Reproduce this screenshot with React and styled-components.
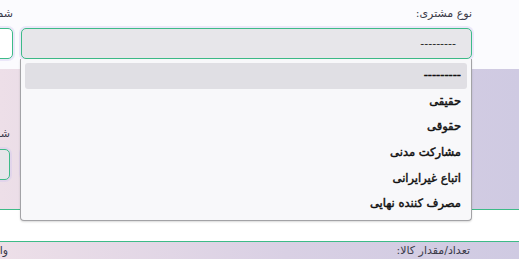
import React from "react";
import styled, { createGlobalStyle } from "styled-components";

const Global = createGlobalStyle`
  html, body { margin: 0; padding: 0; background: #ffffff; }
  body { font-family: "DejaVu Sans", "Noto Sans", sans-serif; }
`;

const Page = styled.div`
  position: relative;
  width: 519px;
  height: 259px;
  overflow: hidden;
  direction: rtl;
`;

const Section = styled.div`
  height: ${(p) => p.$h}px;
  box-sizing: border-box;
  padding: ${(p) => p.$pad || "0"};
  background: ${(p) =>
    p.$tone === "grad"
      ? "linear-gradient(to left, #cfcae2 0%, #d9d0e4 45%, #eddfe8 100%)"
      : p.$tone === "white"
      ? "#ffffff"
      : "#fbfbfe"};
  border-bottom: ${(p) => (p.$line ? "1.5px solid #3dbb88" : "none")};
`;

const Row = styled.div`
  display: grid;
  grid-template-columns: ${(p) => p.$cols};
  column-gap: ${(p) => p.$gap}px;
  justify-content: start;
`;

const Field = styled.div`
  display: flex;
  flex-direction: column;
`;

const Label = styled.label`
  font-size: 11px;
  line-height: 16px;
  height: 16px;
  color: #3a3a48;
  white-space: nowrap;
  margin-bottom: ${(p) => p.$mb ?? 6}px;
`;

const SelectBox = styled.div`
  box-sizing: border-box;
  height: 31px;
  border: 1.5px solid #3dbb88;
  border-radius: 5px;
  background: ${(p) => (p.$filled ? "#e7e6ea" : "#ffffff")};
  padding-right: 15px;
  display: flex;
  align-items: center;
  font-size: 11px;
  color: #222;
  box-shadow: 0 0 0 2px rgba(205, 196, 240, 0.35);
`;

const Dropdown = styled.ul`
  position: absolute;
  top: 59px;
  left: 20px;
  width: 452px;
  box-sizing: border-box;
  margin: 0;
  padding: 4px 4px 3px;
  list-style: none;
  background: #f8f8fa;
  border: 1px solid #a3a3a6;
  border-top: none;
  border-radius: 0 0 4px 4px;
  box-shadow: 0 1px 2px rgba(0, 0, 0, 0.15);
`;

const Option = styled.li`
  height: 25.7px;
  line-height: 25.7px;
  padding-right: 6px;
  border-radius: 3px;
  font-size: 11.5px;
  font-weight: normal;
  -webkit-text-stroke: 0.45px #111;
  color: #111;
  background: ${(p) => (p.$active ? "#e0dfe4" : "transparent")};
  white-space: nowrap;
`;

const options = [
  "---------",
  "حقیقی",
  "حقوقی",
  "مشارکت مدنی",
  "اتباع غیرایرانی",
  "مصرف کننده نهایی",
];

export default function App() {
  return (
    <>
      <Global />
      <Page>
        <Section $h={69} $pad="6px 47px 0 0">
          <Row $cols="451px 451px" $gap={8}>
            <Field>
              <Label>نوع مشتری:</Label>
              <SelectBox $filled>---------</SelectBox>
            </Field>
            <Field>
              <Label>شماره اقتصادی:</Label>
              <SelectBox />
            </Field>
          </Row>
        </Section>
        <Section $h={141} $tone="grad" $line $pad="57px 47px 0 0">
          <Row $cols="451px 451px" $gap={11}>
            <Field>
              <Label>شماره ملی:</Label>
              <SelectBox $filled />
            </Field>
            <Field>
              <Label $mb={7}>شماره ثبت:</Label>
              <SelectBox $filled />
            </Field>
          </Row>
        </Section>
        <Section $h={31.5} $tone="white" $line />
        <Section $h={20} $tone="grad" $pad="1px 49px 0 0">
          <Row $cols="451px 451px" $gap={11}>
            <Label $mb={0}>تعداد/مقدار کالا:</Label>
            <Label $mb={0}>واحد اندازه گیری:</Label>
          </Row>
        </Section>
        <Dropdown>
          {options.map((o, i) => (
            <Option key={o} $active={i === 0}>
              {o}
            </Option>
          ))}
        </Dropdown>
      </Page>
    </>
  );
}
